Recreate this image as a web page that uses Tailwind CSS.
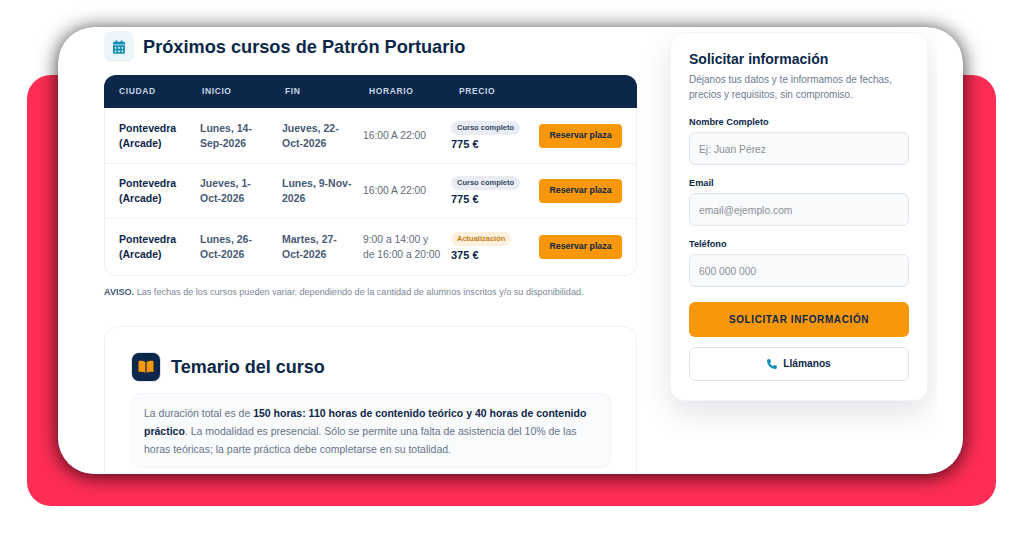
<!DOCTYPE html>
<html lang="es">
<head>
  <meta charset="UTF-8">
  <meta name="viewport" content="width=device-width, initial-scale=1.0">
  <title>Patrón Portuario</title>
  <script src="https://cdn.jsdelivr.net/npm/@tailwindcss/browser@4"></script>
</head>
<body class="bg-white font-['Liberation_Sans',Arial,sans-serif]">
  <div class="relative w-[1024px] h-[536px] overflow-hidden bg-white">
    <!-- fondo rojo -->
    <div class="absolute left-[27px] top-[75px] w-[969px] h-[431px] rounded-[24px] bg-[#ff2d55]"></div>

    <!-- ventana -->
    <div class="absolute left-[58px] top-[27px] w-[905px] h-[447px] rounded-[36px] bg-[#7b4fa6] shadow-[0_2px_20px_rgba(0,0,0,0.8)]">
      <div class="w-full h-full rounded-[36px] overflow-hidden bg-white flex pl-[46px] pt-[4px]">

        <!-- columna izquierda -->
        <div class="w-[533px] shrink-0">
          <div class="flex items-center gap-[9px] h-[31px]">
            <div class="w-[30px] h-[31px] rounded-[8px] bg-[#ecf6fa] flex items-center justify-center">
              <svg class="w-[12px] h-[14px]" viewBox="0 0 448 512" fill="#1390b5"><path d="M128 0c17.700 0 32 14.300 32 32v32h128V32c0-17.700 14.300-32 32-32s32 14.300 32 32v32h48c26.500 0 48 21.500 48 48v48H0v-48c0-26.500 21.500-48 48-48h48V32c0-17.700 14.300-32 32-32zM0 192h448v272c0 26.500-21.500 48-48 48H48c-26.500 0-48-21.500-48-48V192zm64 80v32c0 8.800 7.200 16 16 16h32c8.800 0 16-7.200 16-16v-32c0-8.800-7.200-16-16-16H80c-8.800 0-16 7.200-16 16zm128 0v32c0 8.800 7.200 16 16 16h32c8.800 0 16-7.200 16-16v-32c0-8.800-7.200-16-16-16h-32c-8.800 0-16 7.200-16 16zm144-16c-8.800 0-16 7.200-16 16v32c0 8.800 7.200 16 16 16h32c8.800 0 16-7.200 16-16v-32c0-8.800-7.200-16-16-16h-32zM64 400v32c0 8.800 7.200 16 16 16h32c8.800 0 16-7.200 16-16v-32c0-8.800-7.200-16-16-16H80c-8.800 0-16 7.200-16 16zm144-16c-8.800 0-16 7.200-16 16v32c0 8.800 7.200 16 16 16h32c8.800 0 16-7.200 16-16v-32c0-8.800-7.200-16-16-16h-32zm112 16v32c0 8.800 7.200 16 16 16h32c8.800 0 16-7.200 16-16v-32c0-8.800-7.200-16-16-16h-32c-8.800 0-16 7.200-16 16z"/></svg>
            </div>
            <h2 class="text-[18.2px] leading-[31px] pt-px font-bold text-[#0c2749]">Próximos cursos de Patrón Portuario</h2>
          </div>

          <!-- tabla -->
          <div class="mt-[13px] border border-[#edf0f4] border-t-0 rounded-[12px]">
            <div class="grid grid-cols-[83px_83px_84px_90px_1fr] h-[33.4px] items-center bg-[#0c2749] text-[8.5px] font-bold tracking-[0.6px] text-[#c5d6e6] rounded-t-[12px] -mx-px pl-[15px]">
              <span>CIUDAD</span><span>INICIO</span><span>FIN</span><span>HORARIO</span><span>PRECIO</span>
            </div>
            <div>
              <div class="grid grid-cols-[81px_82px_81px_88px_88px_83px] h-[55.4px] items-center pl-[14px] border-b border-[#f0f2f5] text-[10.5px] leading-[15px]">
                <span class="font-bold text-[#0c2749]">Pontevedra (Arcade)</span>
                <span class="font-bold text-[#475a75] pr-[11px]">Lunes, 14-Sep-2026</span>
                <span class="font-bold text-[#475a75] pr-[10px]">Jueves, 22-Oct-2026</span>
                <span class="text-[10.3px] text-[#5e6b7d]">16:00 A 22:00</span>
                <div>
                  <span class="block w-fit h-[14px] px-[6px] rounded-full bg-[#e9edf3] text-[7.500px] leading-[14px] font-bold text-[#334863]">Curso completo</span>
                  <div class="mt-[3px] text-[11px] font-bold text-[#0c2749] leading-[13px]">775 €</div>
                </div>
                <button class="h-[24px] w-[83px] rounded-[4px] bg-[#f79709] text-[8.8px] font-bold text-[#0c2749]">Reservar plaza</button>
              </div>
              <div class="grid grid-cols-[81px_82px_81px_88px_88px_83px] h-[55.4px] items-center pl-[14px] border-b border-[#f0f2f5] text-[10.5px] leading-[15px]">
                <span class="font-bold text-[#0c2749]">Pontevedra (Arcade)</span>
                <span class="font-bold text-[#475a75] pr-[11px]">Jueves, 1-Oct-2026</span>
                <span class="font-bold text-[#475a75] pr-[10px]">Lunes, 9-Nov-2026</span>
                <span class="text-[10.3px] text-[#5e6b7d]">16:00 A 22:00</span>
                <div>
                  <span class="block w-fit h-[14px] px-[6px] rounded-full bg-[#e9edf3] text-[7.500px] leading-[14px] font-bold text-[#334863]">Curso completo</span>
                  <div class="mt-[3px] text-[11px] font-bold text-[#0c2749] leading-[13px]">775 €</div>
                </div>
                <button class="h-[24px] w-[83px] rounded-[4px] bg-[#f79709] text-[8.8px] font-bold text-[#0c2749]">Reservar plaza</button>
              </div>
              <div class="grid grid-cols-[81px_82px_81px_88px_88px_83px] h-[55.4px] items-center pl-[14px] text-[10.5px] leading-[15px]">
                <span class="font-bold text-[#0c2749]">Pontevedra (Arcade)</span>
                <span class="font-bold text-[#475a75] pr-[11px]">Lunes, 26-Oct-2026</span>
                <span class="font-bold text-[#475a75] pr-[10px]">Martes, 27-Oct-2026</span>
                <span class="text-[10.3px] text-[#5e6b7d] pr-[10px]">9:00 a 14:00 y de 16:00 a 20:00</span>
                <div>
                  <span class="block w-fit h-[14px] px-[6px] rounded-full bg-[#fdf0dd] text-[7.500px] leading-[14px] font-bold text-[#c47f17]">Actualización</span>
                  <div class="mt-[3px] text-[11px] font-bold text-[#0c2749] leading-[13px]">375 €</div>
                </div>
                <button class="h-[24px] w-[83px] rounded-[4px] bg-[#f79709] text-[8.8px] font-bold text-[#0c2749]">Reservar plaza</button>
              </div>
            </div>
          </div>

          <p class="mt-[10px] text-[9.1px] leading-[13px] text-[#7b8696] whitespace-nowrap"><b class="text-[#475a75]">AVISO.</b> Las fechas de los cursos pueden variar, dependiendo de la cantidad de alumnos inscritos y/o su disponibilidad.</p>

          <!-- temario -->
          <div class="mt-[27px] h-[170px] border border-[#f0f2f5] rounded-[14px] pl-[26px] pr-[25px] pt-[25px] bg-white">
            <div class="flex items-center gap-[10px]">
              <div class="w-[30px] h-[30px] rounded-[8px] bg-[#0c2749] border border-[#dfe4ea] flex items-center justify-center">
                <svg class="w-[16px] h-[13px]" viewBox="0 0 16 13" fill="#f79709"><path d="M0.500 1.200C2.700 0.500 5.300 0.700 7.400 1.900V12.800C5.300 11.700 2.700 11.500 0.500 12.100ZM15.500 1.200C13.300 0.500 10.700 0.700 8.600 1.900V12.800C10.700 11.700 13.300 11.500 15.500 12.100Z"/></svg>
              </div>
              <h2 class="text-[18px] leading-[30px] font-bold text-[#0c2749]">Temario del curso</h2>
            </div>
            <div class="mt-[11px] rounded-[10px] border border-[#f1f4f8] bg-[#f9fbfd] px-[12px] pt-[10px] pb-[9px] text-[10.5px] leading-[18px] text-[#667387]">
              La duración total es de <b class="text-[#0c2749]">150 horas: 110 horas de contenido teórico y 40 horas de contenido práctico</b>. La modalidad es presencial. Sólo se permite una falta de asistencia del 10% de las horas teóricas; la parte práctica debe completarse en su totalidad.
            </div>
          </div>
        </div>

        <!-- columna derecha -->
        <div class="w-[300px] h-full overflow-hidden pl-[33px] shrink-0 pt-px">
          <div class="w-[258px] h-[369px] rounded-[14px] bg-white border border-[#f2f4f7] shadow-[0_12px_30px_rgba(15,30,60,0.12)] px-[18px] pt-[17px]">
            <h3 class="text-[14px] leading-[18px] font-bold text-[#0c2749]">Solicitar información</h3>
            <p class="mt-[4px] text-[10px] leading-[15px] text-[#6d7a90]">Déjanos tus datos y te informamos de fechas, precios y requisitos, sin compromiso.</p>

            <label class="block mt-[14px] text-[9.2px] leading-[12px] font-bold text-[#0c2749]">Nombre Completo</label>
            <input placeholder="Ej: Juan Pérez" class="block mt-[4px] w-[220px] h-[33px] rounded-[6px] border border-[#dfe4ec] bg-[#f9fafc] pl-[9px] pt-px text-[10.3px] placeholder:text-[#8a8f97]">
            <label class="block mt-[12px] text-[9.2px] leading-[12px] font-bold text-[#0c2749]">Email</label>
            <input placeholder="email@ejemplo.com" class="block mt-[4px] w-[220px] h-[33px] rounded-[6px] border border-[#dfe4ec] bg-[#f9fafc] pl-[9px] pt-px text-[10.3px] placeholder:text-[#8a8f97]">
            <label class="block mt-[12px] text-[9.2px] leading-[12px] font-bold text-[#0c2749]">Teléfono</label>
            <input placeholder="600 000 000" class="block mt-[4px] w-[220px] h-[33px] rounded-[6px] border border-[#dfe4ec] bg-[#f9fafc] pl-[9px] pt-px text-[10.3px] placeholder:text-[#8a8f97]">

            <button class="block mt-[15px] w-[220px] h-[35px] rounded-[6px] bg-[#f79709] text-[10px] font-bold tracking-[0.6px] text-[#0c2749]">SOLICITAR INFORMACIÓN</button>
            <button class="flex items-center justify-center gap-[6px] mt-[10px] w-[220px] h-[34px] rounded-[6px] border border-[#dfe4ec] bg-white text-[10.2px] font-bold text-[#0c2749]">
              <svg class="w-[10px] h-[10px]" viewBox="0 0 512 512" fill="#1390b5"><path d="M164.900 24.600c-7.700-18.600-28-28.500-47.400-23.200l-88 24C12.100 30.200 0 46 0 64c0 247.400 200.600 448 448 448 18 0 33.800-12.100 38.600-29.500l24-88c5.300-19.400-4.600-39.700-23.200-47.400l-96-40c-16.300-6.800-35.200-2.100-46.300 11.600L304.700 368C234.300 334.700 177.300 277.700 144 207.300l49.300-40.300c13.700-11.200 18.400-30 11.600-46.300l-40-96z"/></svg>
              Llámanos
            </button>
          </div>
        </div>
      </div>
    </div>
  </div>
</body>
</html>
